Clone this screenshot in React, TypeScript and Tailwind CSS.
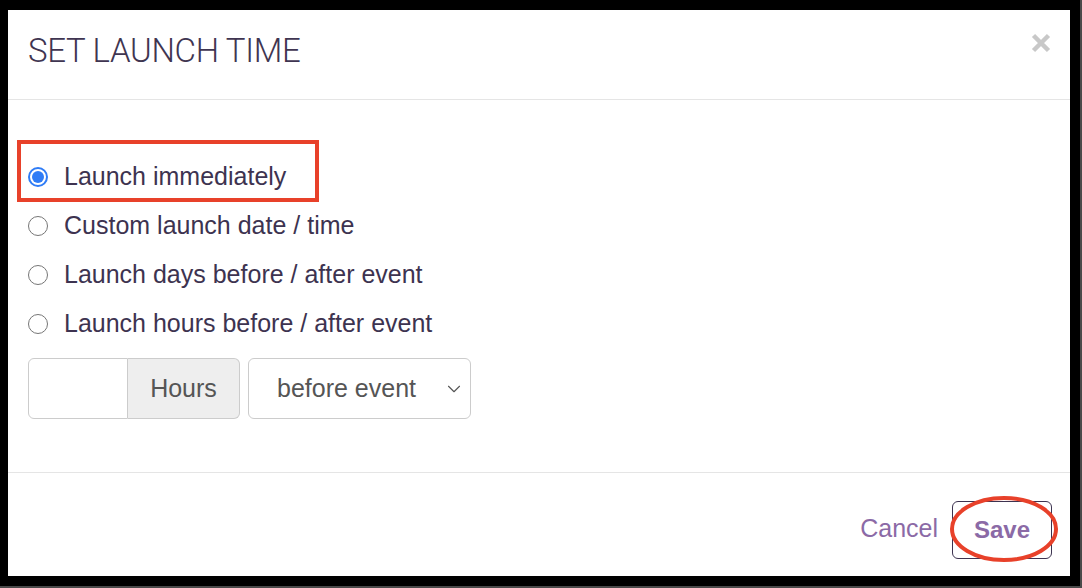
import { ChevronDown } from 'lucide-react';

const options = [
  'Launch immediately',
  'Custom launch date / time',
  'Launch days before / after event',
  'Launch hours before / after event',
];

function Radio({ checked }: { checked: boolean }) {
  if (checked) {
    return (
      <span className="flex h-[20px] w-[20px] shrink-0 items-center justify-center rounded-full border-2 border-[#2f7cf6] bg-white">
        <span className="h-[12px] w-[12px] rounded-full bg-[#2f7cf6]" />
      </span>
    );
  }
  return <span className="h-[20px] w-[20px] shrink-0 rounded-full border-[1.5px] border-[#767676] bg-white" />;
}

export default function App() {
  const selected = 0;

  return (
    <div className="h-[588px] w-[1082px] overflow-hidden border-r-2 border-b-2 border-[#4a4a4a] bg-black pt-[10px] pl-[8px] font-['Liberation_Sans',Arial,sans-serif]">
      <div className="flex h-[566px] w-[1062px] flex-col bg-white">
        {/* header */}
        <div className="flex h-[90px] shrink-0 items-start justify-between border-b border-[#e5e5e5] pl-[20px] pr-[19px]">
          <h1 className="mt-[22px] font-['Roboto',sans-serif] text-[33px] font-light leading-[38px] tracking-[-0.3px] text-[#3f3551]">
            SET LAUNCH TIME
          </h1>
          <button className="mt-[23px]" aria-label="Close">
            <svg width="20" height="20" viewBox="0 0 20 20">
              <path d="M2.5 2.5 L17.5 17.5 M17.5 2.5 L2.5 17.5" stroke="#c8c8c8" strokeWidth="4.5" />
            </svg>
          </button>
        </div>

        {/* body */}
        <div className="relative flex-1 pt-[52px] pl-[20px]">
          <div className="absolute left-[9px] top-[40px] h-[62px] w-[302px] border-[4px] border-[#e8412a]" />
          <ul className="flex flex-col">
            {options.map((label, i) => (
              <li key={label} className="flex h-[49px] items-center gap-[16px]">
                <Radio checked={i === selected} />
                <span className="text-[25px] leading-none text-[#3d3350]">{label}</span>
              </li>
            ))}
          </ul>

          <div className="mt-[10px] flex items-center gap-[8px]">
            <div className="flex h-[61px]">
              <input className="h-full w-[100px] rounded-l-[6px] border border-[#cccccc] px-3 outline-none" />
              <span className="flex h-full w-[112px] items-center justify-center rounded-r-[6px] border border-l-0 border-[#cccccc] bg-[#eeeeee] text-[25px] text-[#555555]">
                Hours
              </span>
            </div>
            <div className="flex h-[61px] w-[223px] items-center justify-between rounded-[6px] border border-[#cccccc] pl-[28px] pr-[5px] text-[25px] text-[#555555]">
              <span>before event</span>
              <ChevronDown size={22} strokeWidth={1.2} color="#555555" />
            </div>
          </div>
        </div>

        {/* footer */}
        <div className="flex h-[104px] shrink-0 items-start justify-end gap-[14px] border-t border-[#e5e5e5] pt-[28px] pr-[18px]">
          <button className="mt-[15px] text-[25px] leading-none text-[#8b6aa6]">Cancel</button>
          <div className="relative">
            <button className="h-[58px] w-[100px] rounded-[6px] border border-[#3d3350] text-[24px] font-bold text-[#8b6aa6]">
              Save
            </button>
            <svg className="absolute -left-[3px] -top-[6px]" width="110" height="68" viewBox="0 0 110 68">
              <ellipse cx="55" cy="34" rx="52" ry="31" fill="none" stroke="#e8412a" strokeWidth="4" />
            </svg>
          </div>
        </div>
      </div>
    </div>
  );
}
